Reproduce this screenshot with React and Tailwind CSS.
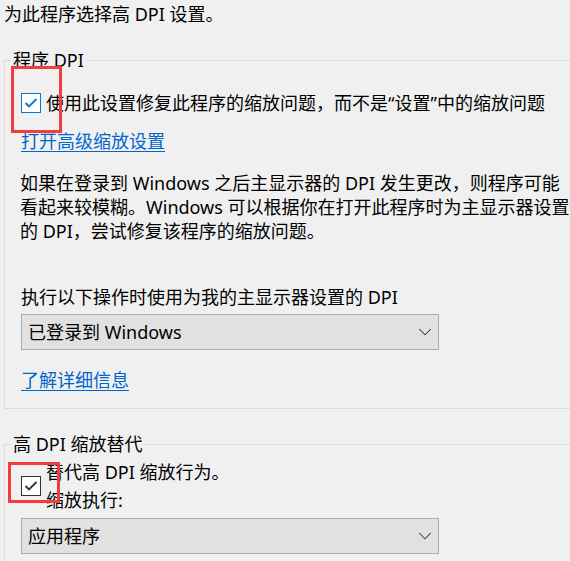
import { ChevronDown } from 'lucide-react';

const Checkbox = ({ focused }) => (
    <div
        className={`w-[20px] h-[20px] shrink-0 bg-white flex items-center justify-center border ${
            focused ? 'border-[#0078d7]' : 'border-[#333333]'
        }`}
    >
        <svg width="14" height="12" viewBox="0 0 14 12" fill="none">
            <polyline
                points="1.5,6 5,9.5 12.5,2"
                stroke={focused ? '#0078d7' : '#333333'}
                strokeWidth="1.8"
            />
        </svg>
    </div>
);

const Select = ({ value }) => (
    <div className="ml-[16px] w-[418px] h-[36px] bg-[#e1e1e1] border border-[#adadad] flex items-center justify-between pl-[6px] pr-[2px]">
        <span className="leading-[28px] whitespace-nowrap">{value}</span>
        <ChevronDown className="w-[22px] h-[22px] text-[#333333]" strokeWidth={1.1} />
    </div>
);

const App = () => {
    return (
        <div
            className="relative w-[570px] h-[561px] overflow-hidden bg-[#f0f0f0] text-[18px] text-black"
            style={{ fontFamily: '"Noto Sans", "Noto Sans CJK SC", sans-serif' }}
        >
            {/* Heading */}
            <div className="pl-[4px] h-[28px] leading-[28px] whitespace-nowrap">为此程序选择高 DPI 设置。</div>

            {/* Program DPI group */}
            <fieldset className="mt-[18px] ml-[4px] w-[620px] border border-[#dcdcdc] pb-[14px]">
                <legend className="ml-[6px] px-[2px] leading-[28px] whitespace-nowrap">程序 DPI</legend>

                <div className="mt-[15px] pl-[16px] h-[28px] flex items-center gap-[5px]">
                    <Checkbox focused />
                    <span className="leading-[28px] whitespace-nowrap">
                        使用此设置修复此程序的缩放问题，而不是“设置”中的缩放问题
                    </span>
                </div>

                <div className="mt-[10px] pl-[16px] h-[28px] leading-[28px]">
                    <span className="text-[#0066cc] underline underline-offset-[3px]">打开高级缩放设置</span>
                </div>

                <p className="mt-[16px] pl-[15px] leading-[24px] whitespace-nowrap">
                    如果在登录到 Windows 之后主显示器的 DPI 发生更改，则程序可能
                    <br />
                    看起来较模糊。Windows 可以根据你在打开此程序时为主显示器设置
                    <br />
                    的 DPI，尝试修复该程序的缩放问题。
                </p>

                <div className="mt-[40px] pl-[16px] h-[28px] leading-[28px] whitespace-nowrap">
                    执行以下操作时使用为我的主显示器设置的 DPI
                </div>

                <div className="mt-[3px]">
                    <Select value="已登录到 Windows" />
                </div>

                <div className="mt-[16px] pl-[16px] h-[28px] leading-[28px]">
                    <span className="text-[#0066cc] underline underline-offset-[3px]">了解详细信息</span>
                </div>
            </fieldset>

            {/* High DPI scaling override group */}
            <fieldset className="mt-[21px] ml-[4px] w-[620px] border border-[#dcdcdc] pb-[20px]">
                <legend className="ml-[6px] px-[2px] leading-[28px] whitespace-nowrap">高 DPI 缩放替代</legend>

                <div className="pl-[16px] flex items-center gap-[5px]">
                    <Checkbox />
                    <div className="leading-[28px] whitespace-nowrap">
                        <div>替代高 DPI 缩放行为。</div>
                        <div>缩放执行:</div>
                    </div>
                </div>

                <div className="mt-[4px]">
                    <Select value="应用程序" />
                </div>
            </fieldset>

            {/* Red highlight boxes */}
            <div className="absolute left-[11px] top-[66px] w-[51px] h-[67px] border-[3px] border-[#f33c3c]" />
            <div className="absolute left-[8px] top-[462px] w-[52px] h-[41px] border-[3px] border-[#f33c3c]" />
        </div>
    );
};

export default App;
